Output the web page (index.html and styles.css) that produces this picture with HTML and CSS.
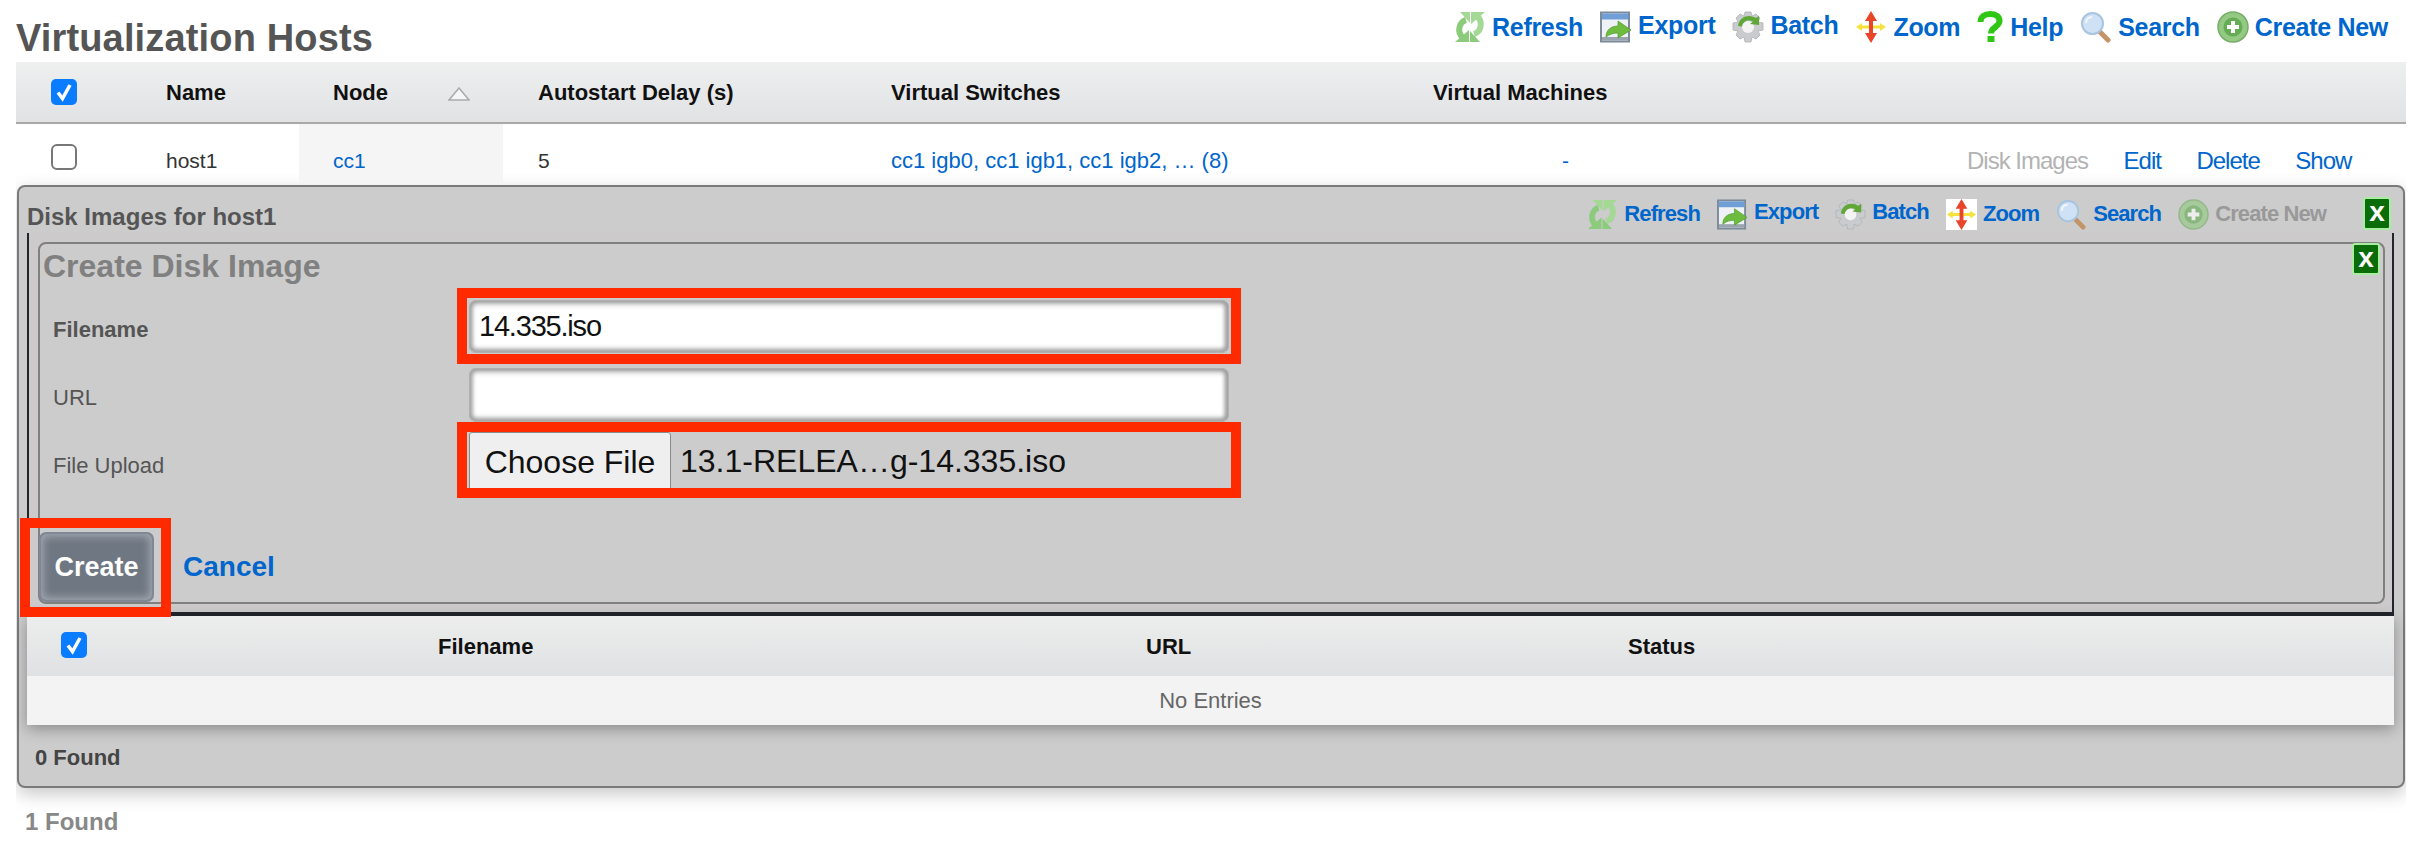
FILE: index.html
```html
<!DOCTYPE html>
<html lang="en">
<head>
<meta charset="utf-8">
<title>Virtualization Hosts</title>
<link rel="stylesheet" href="styles.css">
</head>
<body>
<svg class="defs" width="0" height="0" aria-hidden="true">
  <defs>
    <symbol id="i-refresh" viewBox="0 0 32 32">
      <path d="M12 9C5 11 2.500 21 9 27" fill="none" stroke="#8ccb7c" stroke-width="6"/>
      <path d="M6 1h10v11z" fill="#a4d895"/>
      <path d="M1 31h14V19z" fill="#8ccb7c"/>
      <path d="M20 23C27 21 29.500 11 23 5" fill="none" stroke="#a4d895" stroke-width="6"/>
      <path d="M26 31H16V20z" fill="#8ccb7c"/>
      <path d="M31 1H17v12z" fill="#a4d895"/>
    </symbol>
    <symbol id="i-export" viewBox="0 0 32 32">
      <rect x="1" y="1.500" width="28" height="29" fill="#eef2f6" stroke="#7d8a99" stroke-width="2"/>
      <rect x="2" y="2.500" width="26" height="6" fill="#6f9fd6"/>
      <rect x="2" y="26" width="26" height="3.500" fill="#9aa4ae"/>
      <path d="M6 26c0-7 5-11 12-11v-5l13 9-13 8v-5c-5 0-8 1-12 4z" fill="#6dbb3f" stroke="#4f9a2a" stroke-width=".7"/>
    </symbol>
    <symbol id="i-batch" viewBox="0 0 32 32">
      <path d="M13 1h6l1 4 4-2 4 4-2 4 5 1v7l-5 1 2 4-4 4-4-2-1 5h-6l-1-5-4 2-4-4 2-4-5-1v-7l5-1-2-4 4-4 4 2z" fill="#c9cbce" stroke="#aeb1b5" stroke-width=".8"/>
      <circle cx="16" cy="16" r="6" fill="#f4f4f4"/>
      <path d="M6 15C7 8 12 5 17 5c3 0 5 1 7 2l3-2v9l-9-1 3-2.500c-4-2-10-1-11 5z" fill="#5fa838"/>
    </symbol>
    <symbol id="i-zoom" viewBox="0 0 32 32">
      <path d="M1 16l6-4v2.500h18V12l6 4-6 4v-2.500H7V20z" fill="#f6e23e"/>
      <path d="M16 0l-6 10h4v12h-4l6 10 6-10h-4V10h4z" fill="#e9452b"/>
    </symbol>
    <symbol id="i-help" viewBox="0 0 26 32">
      <path d="M3.500 11C3.500 5.500 8 3 13 3c5.500 0 9.500 2.500 9.500 7 0 6-8.500 6-8.500 12.500" fill="none" stroke="#2fc714" stroke-width="6"/>
      <rect x="10.500" y="25" width="7" height="6" fill="#2fc714"/>
    </symbol>
    <symbol id="i-search" viewBox="0 0 32 32">
      <path d="M19 20l9 9" stroke="#c49468" stroke-width="5" stroke-linecap="round"/>
      <circle cx="12.500" cy="12.500" r="10.500" fill="#cfe2f5" stroke="#a9c4de" stroke-width="2"/>
      <path d="M6 12c0-4 3-6 6-6" fill="none" stroke="#f2f8fd" stroke-width="2"/>
    </symbol>
    <symbol id="i-create" viewBox="0 0 32 32">
      <circle cx="16" cy="16" r="15" fill="#93c983" stroke="#76ad68" stroke-width="1.500"/>
      <circle cx="16" cy="16" r="9.500" fill="#65ad55"/>
      <path d="M16 10v12M10 16h12" stroke="#fff" stroke-width="4"/>
    </symbol>
    <symbol id="i-check" viewBox="0 0 26 26">
      <rect x="0" y="0" width="26" height="26" rx="5" fill="#0a7cff"/>
      <path d="M7 13.500l4.500 6L19 6" fill="none" stroke="#fff" stroke-width="3.500"/>
    </symbol>
    <symbol id="i-uncheck" viewBox="0 0 26 26">
      <rect x="1" y="1" width="24" height="24" rx="5" fill="#fff" stroke="#777" stroke-width="2"/>
    </symbol>
    <symbol id="i-sort" viewBox="0 0 22 14">
      <path d="M11 1 21 13H1z" fill="#f6f6f6" stroke="#aaa" stroke-width="1.500"/>
    </symbol>
  </defs>
</svg>

<header class="page-head">
  <h1 class="page-title">Virtualization Hosts</h1>
  <nav class="toolbar toolbar-main">
    <a class="tool"><svg class="icon"><use href="#i-refresh"/></svg>Refresh</a>
    <a class="tool"><svg class="icon"><use href="#i-export"/></svg><span class="raised">Export</span></a>
    <a class="tool"><svg class="icon"><use href="#i-batch"/></svg><span class="raised">Batch</span></a>
    <a class="tool"><svg class="icon"><use href="#i-zoom"/></svg>Zoom</a>
    <a class="tool"><svg class="icon icon-help"><use href="#i-help"/></svg>Help</a>
    <a class="tool"><svg class="icon"><use href="#i-search"/></svg>Search</a>
    <a class="tool"><svg class="icon"><use href="#i-create"/></svg>Create New</a>
  </nav>
</header>

<main class="list">
  <div class="host-row host-head">
    <span class="cell-check"><svg class="check"><use href="#i-check"/></svg></span>
    <span>Name</span>
    <span class="cell-node sort-cell">Node<svg class="sort"><use href="#i-sort"/></svg></span>
    <span class="cell-plain">Autostart Delay (s)</span>
    <span class="cell-plain">Virtual Switches</span>
    <span class="cell-plain">Virtual Machines</span>
    <span></span>
  </div>
  <div class="host-row host-body">
    <span class="cell-check"><svg class="check"><use href="#i-uncheck"/></svg></span>
    <span>host1</span>
    <a class="cell-node shaded link">cc1</a>
    <span class="cell-plain">5</span>
    <a class="cell-plain link link-wide">cc1 igb0, cc1 igb1, cc1 igb2, … (8)</a>
    <a class="cell-plain link cell-vm">-</a>
    <span class="actions">
      <a class="off">Disk Images</a><a>Edit</a><a>Delete</a><a>Show</a>
    </span>
  </div>

  <section class="panel">
    <div class="panel-head">
      <h2 class="panel-title">Disk Images for host1</h2>
      <nav class="toolbar toolbar-sub">
        <a class="tool"><svg class="icon"><use href="#i-refresh"/></svg>Refresh</a>
        <a class="tool"><svg class="icon"><use href="#i-export"/></svg><span class="raised">Export</span></a>
        <a class="tool"><svg class="icon"><use href="#i-batch"/></svg><span class="raised">Batch</span></a>
        <a class="tool"><svg class="icon icon-white"><use href="#i-zoom"/></svg>Zoom</a>
        <a class="tool"><svg class="icon"><use href="#i-search"/></svg>Search</a>
        <a class="tool tool-off"><svg class="icon"><use href="#i-create"/></svg>Create New</a>
      </nav>
      <button class="close close-panel" type="button">x</button>
    </div>

    <div class="black-box">
      <form class="form-box">
        <button class="close close-form" type="button">x</button>
        <h3 class="form-title">Create Disk Image</h3>
        <div class="field first">
          <label class="label strong">Filename</label>
          <div class="mark mark-input"><input class="text-input" type="text" value="14.335.iso"></div>
        </div>
        <div class="field second">
          <label class="label">URL</label>
          <input class="text-input" type="text">
        </div>
        <div class="field third">
          <label class="label">File Upload</label>
          <div class="mark mark-file">
            <span class="file-btn">Choose File</span>
            <span class="file-name">13.1-RELEA…g-14.335.iso</span>
          </div>
        </div>
        <div class="form-actions">
          <span class="mark-submit"></span>
          <button class="submit" type="button">Create</button>
          <a class="cancel">Cancel</a>
        </div>
      </form>
    </div>

    <div class="images">
      <div class="image-row image-head">
        <span class="image-check"><svg class="check"><use href="#i-check"/></svg></span>
        <span>Filename</span>
        <span>URL</span>
        <span>Status</span>
      </div>
      <div class="image-empty">No Entries</div>
    </div>
    <p class="panel-count">0 Found</p>
  </section>
  <p class="page-count">1 Found</p>
</main>
</body>
</html>
```
FILE: styles.css
```css
* { box-sizing: border-box; }
html, body { margin: 0; padding: 0; background: #fff; }
body { font-family: "Liberation Sans", Arial, sans-serif; color: #333; height: 852px; overflow: hidden; }
.defs { position: absolute; }
a { color: #0066cc; text-decoration: none; }
h1, h2, h3, p { margin: 0; }

.page-head { display: flex; justify-content: space-between; height: 62px; padding: 0 42px 0 16px; }
.page-title { font-size: 38px; letter-spacing: .15px; line-height: 44px; padding-top: 16px; font-weight: 700; color: #555; white-space: nowrap; }

.toolbar { display: flex; align-items: center; }
.toolbar-main { gap: 17px; height: 54px; font-size: 25px; letter-spacing: -.3px; font-weight: 700; }
.toolbar-sub { gap: 17px; font-size: 22px; letter-spacing: -.9px; font-weight: 700; margin-left: auto; }
.tool { display: flex; align-items: center; white-space: nowrap; }
.toolbar-main .icon { width: 32px; height: 32px; margin-right: 6px; }
.toolbar-sub .icon { width: 31px; height: 31px; margin-right: 6px; }
.icon { filter: blur(.4px); flex: none; }
.toolbar-main .icon-help { width: 26px; margin: 0 7px 0 0; }
.icon-white { background: #fff; }
.raised { position: relative; top: -2px; }
.tool-off { color: #999; }
.tool-off .icon { opacity: .65; }

.list { margin-left: 16px; width: 2390px; height: 790px; overflow: hidden; }

.host-row { display: grid; grid-template-columns: 150px 133px 204px 353px 542px 570px 1fr; font-size: 21px; }
.host-head { height: 62px; padding-top: 2px; align-items: center; font-size: 22px; font-weight: 700; color: #111; background: linear-gradient(#eeefef, #e1e2e4); border-bottom: 2px solid #a9a9a9; }
.host-head .cell-check { margin-top: -2px; }
.host-body { height: 59px; background: #fff; color: #333; }
.host-body > * { display: flex; align-items: center; padding-top: 15px; }
.cell-check { padding-left: 35px; }
.cell-node { padding-left: 34px; }
.cell-plain { padding-left: 35px; }
.cell-vm { padding-left: 164px; }
.host-body .cell-check { padding-top: 7px; }
.shaded { background: #f5f5f5; }
.link { color: #0066cc; }
.link-wide { font-size: 22px; white-space: nowrap; }
.check { width: 26px; height: 26px; display: block; }
.sort-cell { display: flex; align-items: center; }
.sort { width: 22px; height: 14px; margin-left: 60px; margin-top: 2px; }
.host-body .actions { gap: 35.500px; font-size: 24px; letter-spacing: -1px; padding-top: 14px; margin-left: -1px; white-space: nowrap; }
.off { color: #b3b3b3; }

.panel { margin: 2px 1px 0 1px; width: 2388px; height: 603px; background: #ccc; border: 2px solid #7a7a7a; border-radius: 8px; box-shadow: 0 6px 18px rgba(0,0,0,.22); }
.panel-head { display: flex; align-items: center; height: 46px; padding: 8px 12px 0 8px; }
.panel-title { font-size: 24px; font-weight: 700; color: #555; padding-top: 6px; }
.close { flex: none; width: 28px; height: 33px; padding: 0 0 3px; border: 2px solid #a9eda0; border-radius: 3px; background: #0a6d0a; color: #fff; font: 700 28px/24px "Liberation Sans", Arial, sans-serif; }
.close-panel { margin-left: 37px; margin-top: -2px; }

.black-box { margin: 0 9px 0 8px; height: 383px; padding: 9px 7px 8px 9px; background: #cccaca; border: solid #22262a; border-width: 0 2px 4px; }
.form-box { position: relative; height: 362px; background: #ccc; border: 2px solid #808080; border-radius: 8px; padding: 0 0 0 2px; }
.close-form { position: absolute; right: 3px; top: -1px; width: 28px; height: 32px; }
.form-title { font-size: 32px; line-height: 40px; padding: 2px 0 0 1px; font-weight: 700; color: #808080; height: 44px; }
.field { display: grid; grid-template-columns: 415px 1fr; align-items: center; font-size: 22px; }
.label { padding-left: 11px; color: #555; }
.strong { font-weight: 700; }
.first { height: 76px; }
.first .label { padding-top: 8px; }
.second { height: 54px; margin-top: 4px; }
.second .label { padding-top: 5px; }
.third { height: 76px; }
.third .label { padding-top: 11px; }
.mark { width: 784px; height: 76px; border: 10px solid #ff2a00; padding: 2px 0 0 2px; }
.mark-file { display: flex; align-items: flex-start; padding: 0 0 0 2px; overflow: hidden; }
.text-input { display: block; width: 760px; height: 53px; padding: 0 9px; border: 1px solid #b0b0b0; border-radius: 6px; background: #fff; box-shadow: inset 0 2px 6px #999, inset 0 -3px 5px #aaa, inset 2px 0 4px #bbb, inset -3px 0 4px #aaa; font: 29px "Liberation Sans", Arial, sans-serif; letter-spacing: -1.2px; color: #111; }
.second .text-input { height: 54px; margin-left: 12px; }
.file-btn { flex: none; width: 202px; height: 58px; text-align: center; font-size: 32px; line-height: 58px; color: #111; background: #efefef; border: 1px solid #8a8a8a; border-radius: 3px 3px 0 0; }
.file-name { font-size: 32px; line-height: 58px; color: #111; padding-left: 9px; white-space: nowrap; }

.form-actions { position: relative; display: flex; align-items: center; margin-top: 34px; margin-left: -3px; }
.mark-submit { position: absolute; left: -19px; top: -14px; width: 151px; height: 99px; border: 10px solid #ff2a00; z-index: 2; }
.submit { width: 115px; height: 70px; padding: 0; border: 2px solid #7f8894; border-radius: 7px; background: #6f7782; box-shadow: inset 0 0 9px 2px #a5abb3; color: #fff; font: 700 27px "Liberation Sans", Arial, sans-serif; }
.cancel { margin-left: 29px; font-size: 28px; font-weight: 700; }

.images { margin: 0 9px 0 8px; box-shadow: 0 4px 14px rgba(0,0,0,.32); }
.image-row { display: grid; grid-template-columns: 411px 708px 482px 1fr; align-items: center; }
.image-head { height: 60px; padding-top: 2px; font-size: 22px; font-weight: 700; color: #111; background: linear-gradient(#ecedec, #e0e1e3); }
.image-check { padding-left: 34px; padding-bottom: 4px; }
.image-empty { height: 49px; background: #f3f3f3; color: #666; font-size: 22px; line-height: 49px; text-align: center; }
.panel-count { font-size: 22px; font-weight: 700; color: #444; padding: 20px 0 0 16px; line-height: 26px; }
.page-count { font-size: 24px; font-weight: 700; color: #888; padding: 20px 0 0 9px; line-height: 28px; }
```
